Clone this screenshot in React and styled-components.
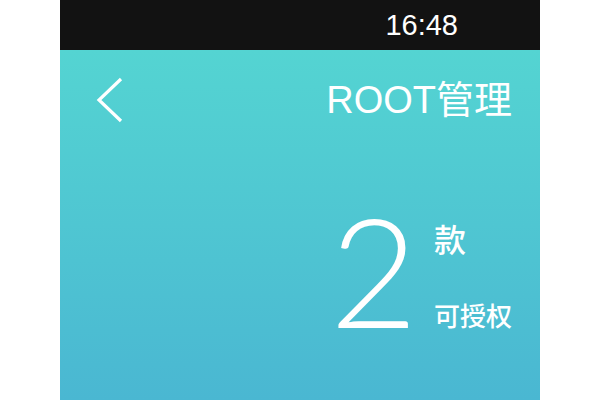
import React from "react";
import styled, { createGlobalStyle } from "styled-components";

const Global = createGlobalStyle`
  html, body { margin: 0; padding: 0; background: #ffffff; }
  body { font-family: "Liberation Sans", Arial, "Noto Sans CJK SC", sans-serif; }
`;

const Phone = styled.div`
  width: 480px;
  margin: 0 auto;
  display: flex;
  flex-direction: column;
`;

const StatusBar = styled.div`
  height: 50px;
  background: #121212;
  display: flex;
  align-items: center;
  justify-content: flex-end;
  padding-right: 82px;
  color: #ffffff;
  font-family: "Liberation Sans", Arial, sans-serif;
  font-size: 29px;
  line-height: 1;
  box-sizing: border-box;
`;

const Screen = styled.div`
  height: 350px;
  background: linear-gradient(180deg, #54d4d2 0%, #4fc6d2 50%, #4ab7d2 100%);
  display: flex;
  flex-direction: column;
`;

const NavBar = styled.div`
  height: 100px;
  display: flex;
  align-items: center;
  justify-content: space-between;
  padding: 0 28px 0 36px;
`;

const BackButton = styled.button`
  background: none;
  border: none;
  padding: 0;
  display: flex;
  cursor: pointer;
`;

const Title = styled.h1`
  margin: 0;
  color: #ffffff;
  font-family: "Liberation Sans", Arial, "Noto Sans CJK SC", sans-serif;
  font-weight: 400;
  font-size: 38px;
  line-height: 1;
`;

const CountRow = styled.div`
  display: flex;
  justify-content: flex-end;
  align-items: stretch;
  padding: 60px 28px 0 0;
  gap: 16px;
`;

const BigNumber = styled.div`
  color: #ffffff;
  font-family: "Lato", "Inter", "Roboto", sans-serif;
  font-weight: 300;
  font-size: 152px;
  line-height: 118px;
  height: 120px;
`;

const Labels = styled.div`
  display: flex;
  flex-direction: column;
  justify-content: space-between;
  padding: 12px 0 2px;
`;

const Label = styled.span`
  color: #ffffff;
  font-family: "Noto Sans CJK SC", sans-serif;
  font-weight: 500;
  font-size: ${(p) => p.$size}px;
  line-height: 1;
`;

export default function App() {
  return (
    <>
      <Global />
      <Phone>
        <StatusBar>16:48</StatusBar>
        <Screen>
          <NavBar>
            <BackButton aria-label="back">
              <svg width="28" height="46" viewBox="0 0 28 46">
                <polyline
                  points="25,2 3,23 25,44"
                  fill="none"
                  stroke="#ffffff"
                  strokeWidth="3.2"
                />
              </svg>
            </BackButton>
            <Title>ROOT管理</Title>
          </NavBar>
          <CountRow>
            <BigNumber>2</BigNumber>
            <Labels>
              <Label $size={32}>款</Label>
              <Label $size={26}>可授权</Label>
            </Labels>
          </CountRow>
        </Screen>
      </Phone>
    </>
  );
}
